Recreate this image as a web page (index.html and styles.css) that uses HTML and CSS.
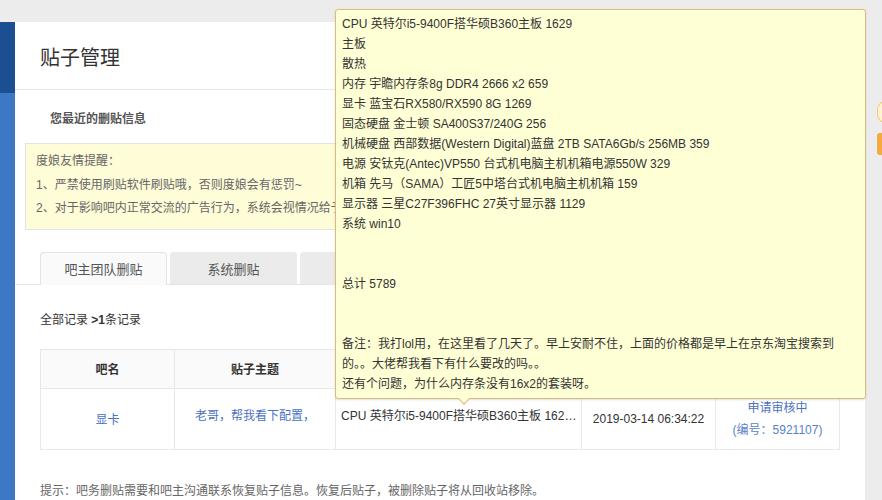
FILE: index.html
```html
<!DOCTYPE html>
<html>
<head>
  <title>贴子管理</title>
  <meta charset="utf-8">
  <link rel="stylesheet" href="styles.css">
</head>
<body>
  <div class="topband"></div>
  <div class="layout">
    <div class="sidebar">
      <div class="sidebar-top"></div>
    </div>

    <div class="panel">
      <div class="header">
        <h1>贴子管理</h1>
      </div>

      <div class="content">
        <div class="section-title">您最近的删贴信息</div>

        <div class="notice">
          <div>度娘友情提醒：</div>
          <div>1、严禁使用刷贴软件刷贴哦，否则度娘会有惩罚~</div>
          <div>2、对于影响吧内正常交流的广告行为，系统会视情况给予处罚。</div>
        </div>

        <div class="tabs">
          <div class="tab active">吧主团队删贴</div>
          <div class="tab">系统删贴</div>
          <div class="tab">删贴申诉</div>
        </div>

        <div class="records">全部记录 <b>&gt;1</b>条记录</div>

        <table class="list">
          <colgroup>
            <col style="width: 134px">
            <col style="width: 161px">
            <col style="width: 246px">
            <col style="width: 134px">
            <col>
          </colgroup>
          <thead>
            <tr>
              <th>吧名</th>
              <th>贴子主题</th>
              <th>贴子内容</th>
              <th>删除时间</th>
              <th>状态</th>
            </tr>
          </thead>
          <tbody>
            <tr>
              <td><a class="link" href="#">显卡</a></td>
              <td class="raised"><a class="link" href="#">老哥，帮我看下配置，</a></td>
              <td class="raised left"><div class="clip">CPU 英特尔i5-9400F搭华硕B360主板 1629 主板 散热</div></td>
              <td>2019-03-14 06:34:22</td>
              <td class="status">
                <div class="link">申请审核中</div>
                <div class="link soft">(编号：5921107)</div>
              </td>
            </tr>
          </tbody>
        </table>

        <div class="hint">提示：吧务删贴需要和吧主沟通联系恢复贴子信息。恢复后贴子，被删除贴子将从回收站移除。</div>
      </div>
    </div>
  </div>

  <!-- hover preview of the post body -->
  <div class="tip">
    <div>CPU 英特尔i5-9400F搭华硕B360主板 1629</div>
    <div>主板</div>
    <div>散热</div>
    <div>内存 宇瞻内存条8g DDR4 2666 x2 659</div>
    <div>显卡 蓝宝石RX580/RX590 8G 1269</div>
    <div>固态硬盘 金士顿 SA400S37/240G 256</div>
    <div>机械硬盘 西部数据(Western Digital)蓝盘 2TB SATA6Gb/s 256MB 359</div>
    <div>电源 安钛克(Antec)VP550 台式机电脑主机机箱电源550W 329</div>
    <div>机箱 先马（SAMA）工匠5中塔台式机电脑主机机箱 159</div>
    <div>显示器 三星C27F396FHC 27英寸显示器 1129</div>
    <div>系统 win10</div>
    <div class="blank"></div>
    <div class="blank"></div>
    <div>总计 5789</div>
    <div class="blank"></div>
    <div class="blank"></div>
    <div>备注：我打lol用，在这里看了几天了。早上安耐不住，上面的价格都是早上在京东淘宝搜索到的。。大佬帮我看下有什么要改的吗。。</div>
    <div>还有个问题，为什么内存条没有16x2的套装呀。</div>
  </div>

  <div class="side-widget">
    <div class="widget-bulb"></div>
    <div class="widget-tab"></div>
  </div>
</body>
</html>
```

FILE: styles.css
```css
html, body {
  height: 100%;
}

body {
  margin: 0;
  background-color: #ececec;
  font-family: "Liberation Sans", Arial, "Noto Sans CJK SC", sans-serif;
  font-size: 12px;
  color: #333;
  overflow: hidden;
}

.topband {
  height: 22px;
}

.layout {
  display: flex;
  height: calc(100% - 22px);
}

.sidebar {
  width: 15px;
  background-color: #3d78c4;
}

.sidebar-top {
  height: 71px;
  background-color: #1c4f91;
}

.panel {
  width: 850px;
  background-color: #fff;
}

.header {
  height: 67px;
  border-bottom: 1px solid #e8e8e8;
  display: flex;
  align-items: center;
  padding: 0 25px;
}

h1 {
  font-size: 20px;
  font-weight: normal;
  margin: 2px 0 0;
  color: #333;
}

.content {
  padding: 0 25px;
}

.section-title {
  margin-top: 19px;
  padding-left: 10px;
  line-height: 20px;
  font-weight: bold;
  color: #555;
}

.notice {
  margin: 14px 0 0 -15px;
  width: 818px;
  padding: 6px 10px 8px;
  background-color: #fffdd8;
  border: 1px solid #e3e3e3;
  line-height: 23.5px;
  color: #666;
}

.tabs {
  display: flex;
  gap: 3px;
  margin: 22px -25px 0;
  padding: 0 25px;
  border-bottom: 1px solid #e6e6e6;
}

.tab {
  width: 125px;
  height: 31px;
  line-height: 33px;
  text-align: center;
  background-color: #ebebeb;
  border: 1px solid #ebebeb;
  border-bottom: none;
  border-radius: 4px 4px 0 0;
  color: #555;
  font-size: 13px;
}

.tab.active {
  background-color: #fafafa;
  border-color: #e3e3e3;
  height: 32px;
  margin-bottom: -1px;
}

.records {
  margin-top: 25px;
  line-height: 20px;
  color: #333;
}

.list {
  margin-top: 19px;
  width: 800px;
  border-collapse: collapse;
  table-layout: fixed;
}

.list th,
.list td {
  border: 1px solid #e8e8e8;
  text-align: center;
  padding: 0 6px;
}

.list thead tr {
  height: 39px;
}

.list tbody tr {
  height: 61px;
}

.list th {
  background-color: #fafafa;
  color: #333;
}

.list td {
  color: #333;
}

.list td.raised {
  padding-bottom: 8px;
}

.list td.left {
  text-align: left;
  padding-left: 5px;
  padding-right: 2px;
}

.clip {
  white-space: nowrap;
  overflow: hidden;
  text-overflow: ellipsis;
}

.link {
  color: #4a72c2;
  text-decoration: none;
}

.status {
  line-height: 22px;
}

.soft {
  color: #5b7fc8;
}

.hint {
  margin-top: 31px;
  line-height: 20px;
  color: #666;
}

.tip {
  position: absolute;
  left: 335px;
  top: 9px;
  width: 498px;
  padding: 4px 25px 4px 6px;
  background-color: #ffffd6;
  border: 1px solid #d9bb7f;
  border-radius: 3px;
  box-shadow: 0 1px 2px rgba(0, 0, 0, 0.12);
  font-size: 12px;
  line-height: 20px;
  color: #333;
}

.tip .blank {
  height: 20px;
}

.tip::after {
  content: "";
  position: absolute;
  left: 124px;
  bottom: -5px;
  width: 7px;
  height: 7px;
  background-color: #ffffd6;
  border-right: 1px solid #d9bb7f;
  border-bottom: 1px solid #d9bb7f;
  transform: rotate(45deg);
}

.side-widget {
  position: absolute;
  left: 877px;
  top: 100px;
  width: 10px;
}

.widget-bulb {
  height: 22px;
  border: 1px solid #f7c779;
  border-right: none;
  border-radius: 10px 0 0 10px;
  background-color: #fff3d2;
}

.widget-tab {
  margin-top: 9px;
  height: 22px;
  border-radius: 3px 0 0 3px;
  background-color: #f5a93f;
}
```
